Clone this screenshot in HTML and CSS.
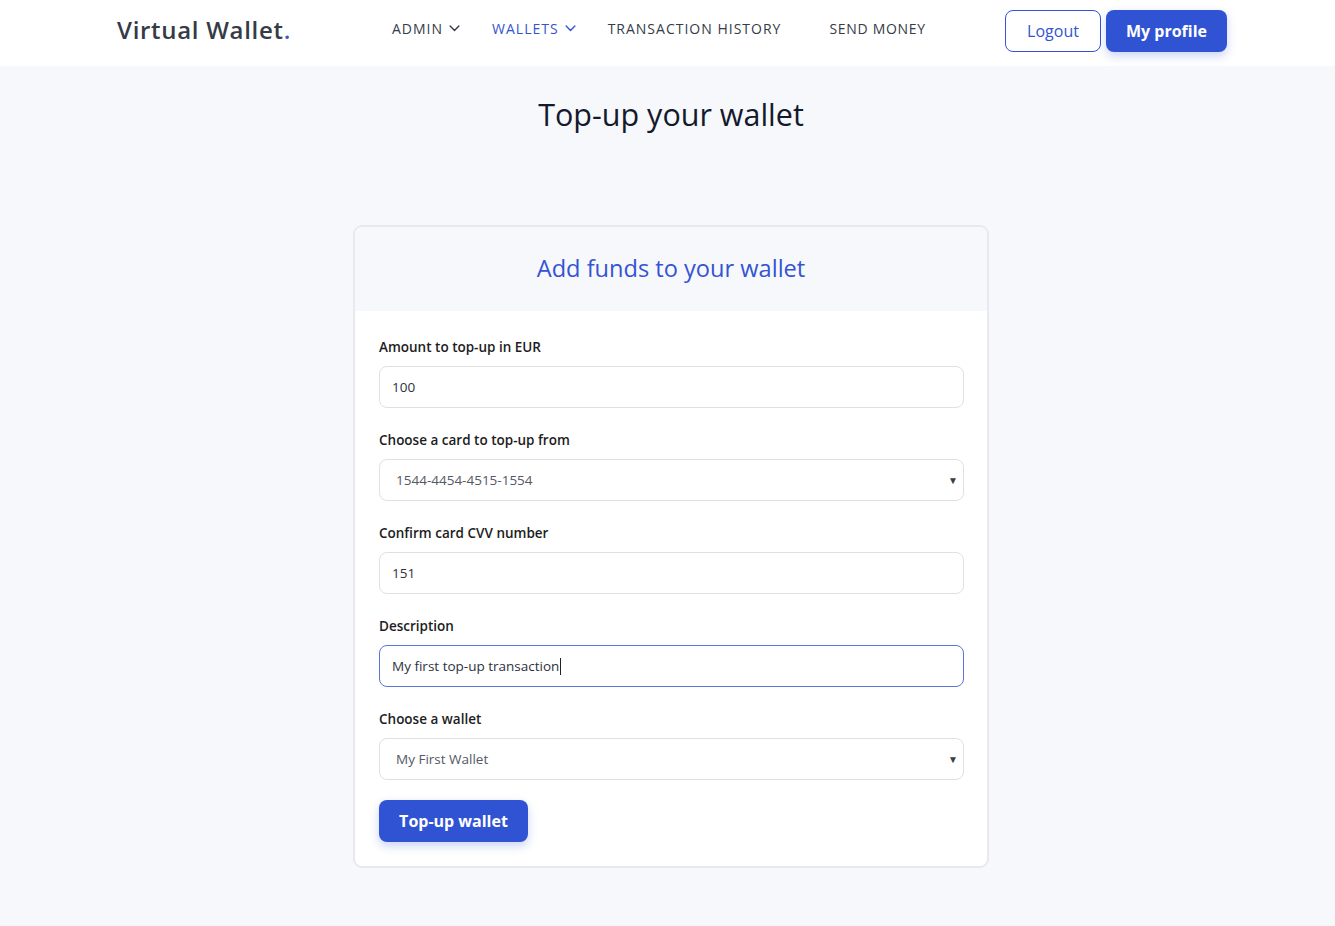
FILE: index.html
```html
<!DOCTYPE html>
<html lang="en">
<head>
<meta charset="utf-8">
<title>Top-up your wallet</title>
<link rel="stylesheet" href="styles.css">
</head>
<body>
<header class="navbar">
  <div class="brand">Virtual Wallet<span class="dot">.</span></div>
  <nav class="nav">
    <a class="nav-item">ADMIN <svg class="chev" viewBox="0 0 12 8" width="11" height="7"><path d="M1 1.2l5 5 5-5" fill="none" stroke="currentColor" stroke-width="1.6" stroke-linecap="round" stroke-linejoin="round"/></svg></a>
    <a class="nav-item active">WALLETS <svg class="chev" viewBox="0 0 12 8" width="11" height="7"><path d="M1 1.2l5 5 5-5" fill="none" stroke="currentColor" stroke-width="1.6" stroke-linecap="round" stroke-linejoin="round"/></svg></a>
    <a class="nav-item">TRANSACTION HISTORY</a>
    <a class="nav-item wide">SEND MONEY</a>
  </nav>
  <div class="actions">
    <button class="btn btn-outline">Logout</button>
    <button class="btn btn-primary">My profile</button>
  </div>
</header>

<main class="page">
  <h1 class="page-title">Top-up your wallet</h1>

  <section class="card">
    <div class="card-header">
      <h2 class="card-title">Add funds to your wallet</h2>
    </div>
    <form class="card-body">
      <div class="group">
        <label class="label">Amount to top-up in EUR</label>
        <div class="input">100</div>
      </div>
      <div class="group">
        <label class="label">Choose a card to top-up from</label>
        <div class="input select"><span>1544-4454-4515-1554</span><span class="arrow">▼</span></div>
      </div>
      <div class="group">
        <label class="label">Confirm card CVV number</label>
        <div class="input">151</div>
      </div>
      <div class="group">
        <label class="label">Description</label>
        <div class="input focus">My first top-up transaction<span class="caret"></span></div>
      </div>
      <div class="group last">
        <label class="label">Choose a wallet</label>
        <div class="input select"><span>My First Wallet</span><span class="arrow">▼</span></div>
      </div>
      <button type="button" class="btn btn-primary btn-submit">Top-up wallet</button>
    </form>
  </section>
</main>
</body>
</html>
```

FILE: styles.css
```css
* { box-sizing: border-box; }
html, body { margin: 0; padding: 0; }
body {
  font-family: "Open Sans", "Noto Sans", sans-serif;
  background: #f7f8fc;
  color: #1d2030;
  min-height: 926px;
}
.navbar {
  height: 66px;
  background: #ffffff;
  display: flex;
  align-items: center;
  padding: 0 108px 0 117px;
}
.brand {
  font-size: 24px;
  font-weight: 600;
  color: #363b47;
  letter-spacing: 0.7px;
  width: 275px;
  margin-top: -7px;
}
.brand .dot { color: #3454d1; }
.nav {
  display: flex;
  align-items: center;
  margin-top: -10px;
}
.nav-item {
  font-size: 14px;
  letter-spacing: 1px;
  color: #363b47;
  font-weight: 500;
  display: flex;
  align-items: center;
  gap: 6px;
  margin-right: 32px;
  cursor: pointer;
}
.nav-item.active { color: #3454d1; }
.nav-item.wide { margin-left: 16px; letter-spacing: 0.7px; }
.chev { display: block; }
.actions {
  margin-left: auto;
  display: flex;
  gap: 5px;
  margin-top: -5px;
}
.btn {
  font-family: inherit;
  font-size: 16px;
  height: 42px;
  border-radius: 8px;
  cursor: pointer;
}
.btn-outline {
  background: #fff;
  border: 1px solid #3454d1;
  color: #3454d1;
  width: 96px;
}
.btn-primary {
  background: #3053d4;
  border: none;
  color: #fff;
  font-weight: 700;
  width: 121px;
  box-shadow: 0 4px 10px rgba(48, 83, 212, 0.25);
}
.page {
  display: flex;
  flex-direction: column;
  align-items: center;
  padding-top: 28px;
  padding-left: 7px;
  padding-bottom: 58px;
}
.page-title {
  margin: 0;
  font-size: 30.5px;
  font-weight: 400;
  color: #141a2b;
  line-height: 40px;
}
.card {
  margin-top: 91px;
  width: 636px;
  background: #fff;
  border: 2px solid #e8e9ee;
  border-radius: 9px;
  overflow: hidden;
}
.card-header {
  background: #f7f8fc;
  height: 84px;
  display: flex;
  align-items: center;
  justify-content: center;
}
.card-title {
  margin: 0;
  font-size: 23.6px;
  font-weight: 400;
  color: #3454d1;
  margin-top: -2px;
}
.card-body {
  padding: 26px 23px 24px 24px;
  display: flex;
  flex-direction: column;
  align-items: flex-start;
}
.group {
  width: 100%;
  margin-bottom: 22px;
}
.group.last { margin-bottom: 20px; }
.label {
  display: block;
  font-size: 13.5px;
  font-weight: 600;
  color: #1c1c22;
  line-height: 21px;
  margin-bottom: 8px;
}
.input {
  height: 42px;
  border: 1px solid #dfe0e6;
  border-radius: 8px;
  padding: 0 12px;
  display: flex;
  align-items: center;
  font-size: 13.5px;
  font-weight: 500;
  color: #2e3240;
  background: #fff;
}
.input.focus { border-color: #5b74d8; }
.caret {
  display: inline-block;
  width: 1px;
  height: 17px;
  background: #222;
  margin-left: 1px;
}
.input.select {
  padding: 0 5px 0 16px;
  justify-content: space-between;
  color: #555862;
  font-weight: 400;
}
.arrow {
  font-size: 10px;
  color: #3a3d45;
}
.btn-submit {
  width: 149px;
  font-size: 16px;
}
```
